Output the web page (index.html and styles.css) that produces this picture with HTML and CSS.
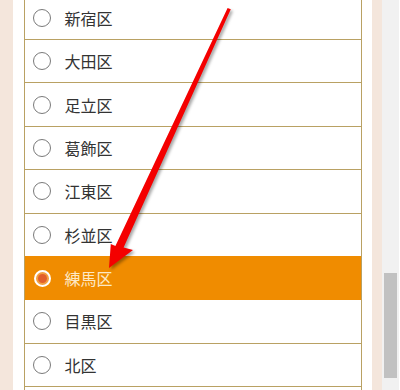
FILE: index.html
```html
<!DOCTYPE html>
<html lang="ja">
<head>
<meta charset="utf-8">
<title>区の選択</title>
<link rel="stylesheet" href="styles.css">
</head>
<body>
<div class="page">
  <div class="edge edge-left"></div>
  <main class="content">
    <ul class="list">
      <li class="row"><span class="radio"></span><span class="label">新宿区</span></li>
      <li class="row"><span class="radio"></span><span class="label">大田区</span></li>
      <li class="row"><span class="radio"></span><span class="label">足立区</span></li>
      <li class="row"><span class="radio"></span><span class="label">葛飾区</span></li>
      <li class="row"><span class="radio"></span><span class="label">江東区</span></li>
      <li class="row"><span class="radio"></span><span class="label">杉並区</span></li>
      <li class="row selected"><span class="radio"></span><span class="label">練馬区</span></li>
      <li class="row"><span class="radio"></span><span class="label">目黒区</span></li>
      <li class="row"><span class="radio"></span><span class="label">北区</span></li>
    </ul>
  </main>
  <div class="edge edge-right"></div>
  <div class="scrollbar"><div class="thumb"></div></div>
  <svg class="arrow" width="400" height="390" viewBox="0 0 400 390" aria-hidden="true">
    <polygon points="227.6,8 230.8,9.2 123.6,247.6 133,250 109,268 110.8,244 115.4,246" fill="#f40000"/>
  </svg>
</div>
</body>
</html>
```
FILE: styles.css
```css
html, body {
  margin: 0;
  padding: 0;
  background: #ffffff;
}

.page {
  position: relative;
  display: flex;
  width: 400px;
  height: 390px;
  overflow: hidden;
  font-family: "Noto Sans CJK JP", "Noto Sans", sans-serif;
}

.edge {
  flex: 0 0 auto;
  background: #f4e6dc;
}

.edge-left {
  width: 13px;
}

.edge-right {
  width: 10px;
}

.content {
  flex: 0 0 auto;
  width: 338px;
  padding: 0 10px 0 11px;
  background: #ffffff;
}

.list {
  list-style: none;
  margin: -3.375px 0 0 0;
  padding: 0 0 20px 0;
  border-left: 1px solid #b9a163;
  border-right: 1px solid #b9a163;
}

.row {
  display: flex;
  align-items: center;
  gap: 13.5px;
  box-sizing: border-box;
  height: 43.375px;
  padding-left: 8px;
  border-bottom: 1px solid #b9a163;
  background: #ffffff;
  color: #333333;
  font-size: 16px;
  line-height: 1;
}

.row:has(+ .selected) {
  border-bottom-color: #f08c00;
}

.radio {
  position: relative;
  box-sizing: border-box;
  width: 18px;
  height: 18px;
  border: 1px solid #7a7a7a;
  border-radius: 50%;
  background: #ffffff;
  flex: 0 0 auto;
}

.label {
  letter-spacing: 0;
}

.selected {
  background: #f08c00;
  border-bottom-color: #f08c00;
  color: #fde8c4;
}

.selected .radio {
  width: 17px;
  height: 17px;
  margin-left: 0.5px;
  margin-right: 0.5px;
  border: 2px solid #ffffff;
  background: #f3a040;
}

.selected .radio::after {
  content: "";
  position: absolute;
  left: 2px;
  top: 2px;
  width: 9px;
  height: 9px;
  border-radius: 50%;
  background: #e2602c;
}

.scrollbar {
  flex: 0 0 auto;
  width: 17px;
  box-sizing: border-box;
  padding: 273px 2px 0 2px;
  background: #f1f1f1;
}

.thumb {
  height: 105px;
  background: #c1c1c1;
}

.arrow {
  position: absolute;
  left: 0;
  top: 0;
  filter: drop-shadow(2px 2px 1.5px rgba(0, 0, 0, 0.35));
}
```
